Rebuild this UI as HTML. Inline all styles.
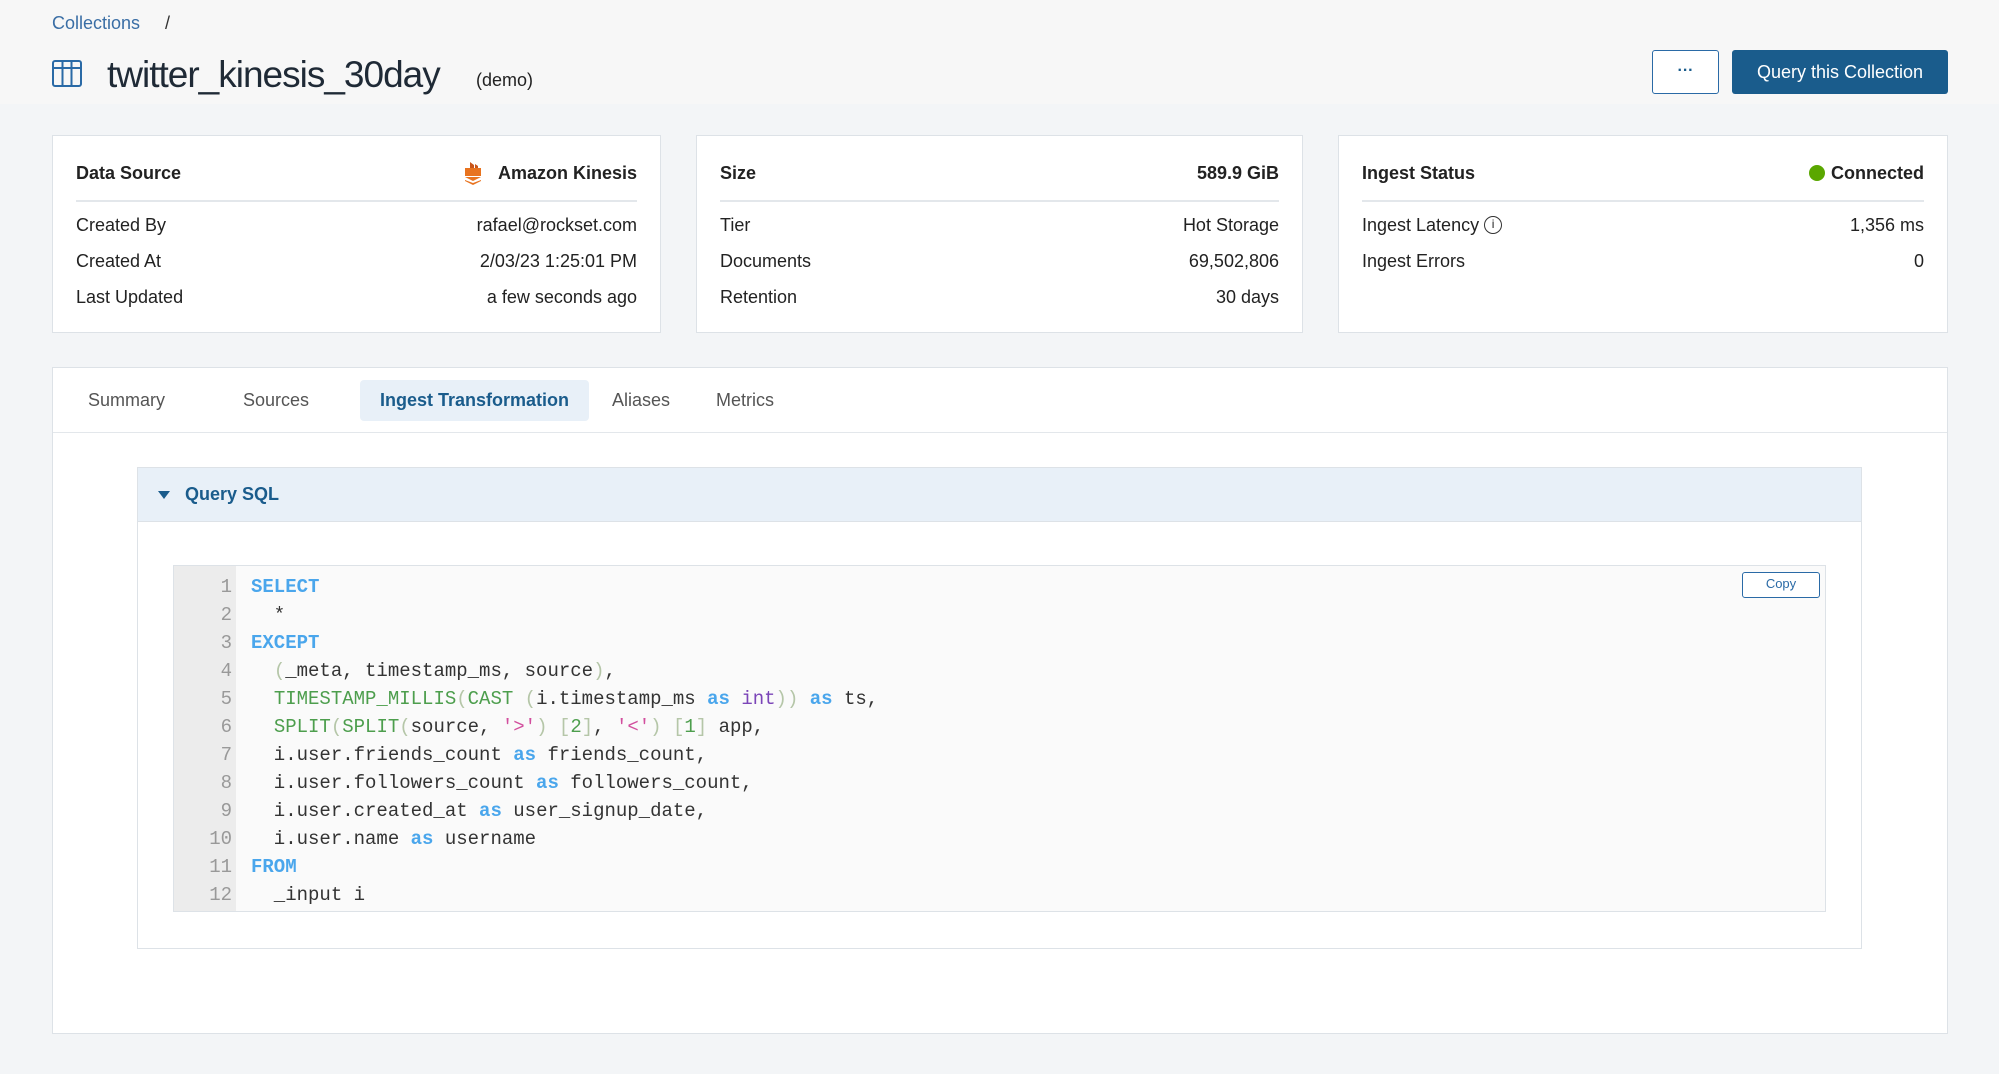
<!DOCTYPE html>
<html><head><meta charset="utf-8"><style>
*{box-sizing:border-box;margin:0;padding:0}
body{width:1999px;height:1074px;background:#f3f5f7;font-family:"Liberation Sans",sans-serif;color:#1f2a36;position:relative;overflow:hidden}
.hdr{position:absolute;left:0;top:0;width:1999px;height:104px;background:#f7f7f7}
.abs{position:absolute}
.card{position:absolute;top:135px;height:198px;background:#fff;border:1px solid #dde2e7}
.card .row{position:absolute;left:23px;right:23px;display:flex;justify-content:space-between;align-items:center;font-size:18px;height:24px;color:#222}
.card .h{font-weight:bold;top:25px}
.card .sep{position:absolute;left:23px;right:23px;top:64px;height:2px;background:#e3e7eb}
.tabs{position:absolute;left:52px;top:367px;width:1896px;height:667px;background:#fff;border:1px solid #dde2e7}
.tab{position:absolute;top:12px;height:41px;line-height:41px;font-size:18px;color:#555}
.code{position:absolute;left:173px;top:565px;width:1653px;height:347px;background:#fafafa;border:1px solid #dde2e7}
.gut{position:absolute;left:0;top:0;width:62px;height:100%;background:#ececec}
.ln{position:absolute;font-family:"Liberation Mono",monospace;font-size:19px;height:28px;line-height:28px;white-space:pre}
.n{width:58px;text-align:right;color:#999;left:0}
.t{left:77px;color:#333}
.k{color:#4aa6ec;font-weight:bold}
.f{color:#4d9e4d}
.p{color:#b5c6a8}
.s{color:#d24f9e}
.i{color:#7b45b8}
</style></head><body>
<div class="hdr"></div>
<div class="abs" style="left:52px;top:13px;font-size:18px;color:#3a6ea5">Collections</div>
<div class="abs" style="left:165px;top:13px;font-size:18px;color:#333">/</div>
<svg class="abs" style="left:52px;top:60px" width="30" height="27" viewBox="0 0 30 27"><rect x="1" y="1" width="28" height="25" rx="2" fill="none" stroke="#2a6aa6" stroke-width="2"/><line x1="1" y1="8" x2="29" y2="8" stroke="#2a6aa6" stroke-width="2"/><line x1="10.5" y1="1" x2="10.5" y2="26" stroke="#2a6aa6" stroke-width="2"/><line x1="19.5" y1="1" x2="19.5" y2="26" stroke="#2a6aa6" stroke-width="2"/></svg>
<div class="abs" style="left:107px;top:54px;font-size:37px;letter-spacing:-1px;color:#1f2a36">twitter_kinesis_30day</div>
<div class="abs" style="left:476px;top:70px;font-size:18px;color:#222">(demo)</div>
<div class="abs" style="left:1652px;top:50px;width:67px;height:44px;border:1.5px solid #2a6aa6;border-radius:3px;background:#fff;text-align:center;line-height:40px;font-size:16px;font-weight:bold;color:#1a5c8c">···</div>
<div class="abs" style="left:1732px;top:50px;width:216px;height:44px;background:#1a5c8c;border-radius:3px;color:#fff;text-align:center;line-height:44px;font-size:18px">Query this Collection</div>

<div class="card" style="left:52px;width:609px">
<div class="row h"><span>Data Source</span><span style="display:flex;align-items:center"><svg width="22" height="26" viewBox="0 0 22 26" style="margin-right:14px"><path d="M3 8h16v8H3z" fill="#e8731f"/><path d="M8 2l4 3v3H8z M13 4l3 2v2h-3z" fill="#c9551a"/><path d="M3 17h16l-8 4z" fill="#e8731f"/><path d="M3 21l8 4 8-4v-1l-8 3-8-3z" fill="#e8731f"/></svg>Amazon Kinesis</span></div>
<div class="sep"></div>
<div class="row" style="top:77px"><span>Created By</span><span>rafael@rockset.com</span></div>
<div class="row" style="top:113px"><span>Created At</span><span>2/03/23 1:25:01 PM</span></div>
<div class="row" style="top:149px"><span>Last Updated</span><span>a few seconds ago</span></div>
</div>
<div class="card" style="left:696px;width:607px">
<div class="row h"><span>Size</span><span>589.9 GiB</span></div>
<div class="sep"></div>
<div class="row" style="top:77px"><span>Tier</span><span>Hot Storage</span></div>
<div class="row" style="top:113px"><span>Documents</span><span>69,502,806</span></div>
<div class="row" style="top:149px"><span>Retention</span><span>30 days</span></div>
</div>
<div class="card" style="left:1338px;width:610px">
<div class="row h"><span>Ingest Status</span><span style="display:flex;align-items:center"><span style="width:16px;height:16px;border-radius:50%;background:#5aa700;margin-right:6px"></span>Connected</span></div>
<div class="sep"></div>
<div class="row" style="top:77px"><span style="display:flex;align-items:center">Ingest Latency&nbsp;<span style="display:inline-block;width:18px;height:18px;border:1.5px solid #333;border-radius:50%;font-size:12px;text-align:center;line-height:15px">i</span></span><span>1,356 ms</span></div>
<div class="row" style="top:113px"><span>Ingest Errors</span><span>0</span></div>
</div>

<div class="tabs">
<div class="tab" style="left:35px">Summary</div>
<div class="tab" style="left:190px">Sources</div>
<div class="tab" style="left:307px;width:229px;background:#e8f0f8;border-radius:4px;text-align:center;color:#1a5c8c;font-weight:bold">Ingest Transformation</div>
<div class="tab" style="left:559px">Aliases</div>
<div class="tab" style="left:663px">Metrics</div>
<div class="abs" style="left:0;right:0;top:64px;height:1px;background:#e3e7eb"></div>
</div>

<div class="abs" style="left:137px;top:467px;width:1725px;height:482px;background:#fff;border:1px solid #dde2e7"></div>
<div class="abs" style="left:138px;top:468px;width:1723px;height:54px;background:#e8f0f8;border-bottom:1px solid #dde2e7"></div>
<div class="abs" style="left:158px;top:491px;width:0;height:0;border-left:6px solid transparent;border-right:6px solid transparent;border-top:8px solid #1a5c8c"></div>
<div class="abs" style="left:185px;top:484px;font-size:18px;font-weight:bold;color:#1a5c8c">Query SQL</div>

<div class="code">
<div class="gut"></div>
<div class="abs" style="left:1568px;top:6px;width:78px;height:26px;border:1.5px solid #2a6aa6;border-radius:3px;background:#fff;text-align:center;line-height:22px;font-size:13px;color:#2a6aa6">Copy</div>
<div class="ln n" style="top:7px">1</div><div class="ln t" style="top:7px"><span class="k">SELECT</span></div>
<div class="ln n" style="top:35px">2</div><div class="ln t" style="top:35px">  *</div>
<div class="ln n" style="top:63px">3</div><div class="ln t" style="top:63px"><span class="k">EXCEPT</span></div>
<div class="ln n" style="top:91px">4</div><div class="ln t" style="top:91px">  <span class="p">(</span>_meta, timestamp_ms, source<span class="p">)</span>,</div>
<div class="ln n" style="top:119px">5</div><div class="ln t" style="top:119px">  <span class="f">TIMESTAMP_MILLIS</span><span class="p">(</span><span class="f">CAST</span> <span class="p">(</span>i.timestamp_ms <span class="k">as</span> <span class="i">int</span><span class="p">))</span> <span class="k">as</span> ts,</div>
<div class="ln n" style="top:147px">6</div><div class="ln t" style="top:147px">  <span class="f">SPLIT</span><span class="p">(</span><span class="f">SPLIT</span><span class="p">(</span>source, <span class="s">'&gt;'</span><span class="p">)</span> <span class="p">[</span><span class="f">2</span><span class="p">]</span>, <span class="s">'&lt;'</span><span class="p">)</span> <span class="p">[</span><span class="f">1</span><span class="p">]</span> app,</div>
<div class="ln n" style="top:175px">7</div><div class="ln t" style="top:175px">  i.user.friends_count <span class="k">as</span> friends_count,</div>
<div class="ln n" style="top:203px">8</div><div class="ln t" style="top:203px">  i.user.followers_count <span class="k">as</span> followers_count,</div>
<div class="ln n" style="top:231px">9</div><div class="ln t" style="top:231px">  i.user.created_at <span class="k">as</span> user_signup_date,</div>
<div class="ln n" style="top:259px">10</div><div class="ln t" style="top:259px">  i.user.name <span class="k">as</span> username</div>
<div class="ln n" style="top:287px">11</div><div class="ln t" style="top:287px"><span class="k">FROM</span></div>
<div class="ln n" style="top:315px">12</div><div class="ln t" style="top:315px">  _input i</div>
</div>
</body></html>
